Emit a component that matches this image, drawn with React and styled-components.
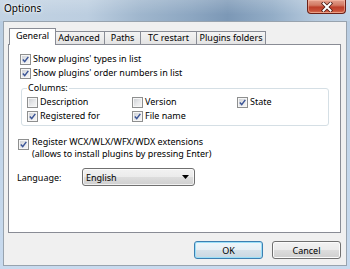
import React from 'react';
import styled, { createGlobalStyle, css } from 'styled-components';

const GlobalStyle = createGlobalStyle`
  html, body { margin: 0; padding: 0; }
  body {
    font-family: "Noto Sans", "Open Sans", sans-serif;
    font-size: 9px;
    color: #000;
  }
  * { box-sizing: border-box; }
`;

const Window = styled.div`
  width: 350px;
  height: 269px;
  display: flex;
  flex-direction: column;
  overflow: hidden;
  background: linear-gradient(180deg, #b7cbe0 0%, #c2d5e9 50%, #c8daee 100%);
`;

const TitleBar = styled.div`
  height: 21px;
  flex: none;
  display: flex;
  align-items: flex-start;
  justify-content: space-between;
  padding-left: 4px;
  background:
    linear-gradient(180deg, rgba(255,255,255,0.18), rgba(255,255,255,0) 70%),
    linear-gradient(90deg, #c3d3e3 0%, #bccee0 25%, #9fb6cd 40%, #8ca6c1 55%, #7c98b6 65%, #93adc7 78%, #b5c9dd 90%, #c2d4e6 100%);
`;

const Title = styled.span`
  font-size: 10px;
  line-height: 16px;
  color: #000;
  text-shadow: 0 0 4px rgba(255,255,255,0.9), 0 0 2px rgba(255,255,255,0.9);
`;

const CloseButton = styled.div`
  width: 39px;
  height: 14px;
  margin-right: 4px;
  border: 1px solid #6b2118;
  border-top: none;
  border-radius: 0 0 4px 4px;
  background: linear-gradient(180deg, #e3a08e 0%, #d27a64 40%, #bd3f2a 55%, #c9523a 85%, #dc8463 100%);
  box-shadow: inset 0 0 0 1px rgba(255,200,180,0.5);
  display: flex;
  align-items: center;
  justify-content: center;
`;

const Client = styled.div`
  flex: 1;
  margin: 0 3px 3px;
  border: 1px solid #98a3ae;
  background: #f0f0f0;
  display: flex;
  flex-direction: column;
  padding: 6px 5px 6px 4px;
`;

const TabStrip = styled.div`
  height: 17px;
  margin-bottom: -1px;
  display: flex;
  align-items: flex-start;
  padding-left: 3px;
  position: relative;
  z-index: 1;
`;

const Tab = styled.div`
  width: ${(p) => p.$w}px;
  height: 13px;
  margin-top: 3px;
  margin-left: -1px;
  line-height: 12px;
  text-align: center;
  white-space: nowrap;
  border: 1px solid #898c95;
  border-bottom: none;
  background: linear-gradient(180deg, #f4f4f4 0%, #ececec 50%, #e3e3e3 100%);
  ${(p) => p.$first && css`margin-left: 0;`}
  ${(p) =>
    p.$active &&
    css`
      width: ${p.$w + 4}px;
      height: 17px;
      margin: 0 -2px 0 -2px;
      padding-top: 1px;
      background: #fff;
      position: relative;
      z-index: 2;
    `}
`;

const Panel = styled.div`
  height: 189px;
  background: #fff;
  border: 1px solid #898c95;
  display: flex;
  flex-direction: column;
`;

const CheckRow = styled.label`
  display: flex;
  align-items: center;
  gap: 2px;
  height: 14px;
  line-height: 14px;
  white-space: nowrap;
  padding-left: ${(p) => p.$indent ?? 0}px;
  margin-top: ${(p) => p.$top ?? 0}px;
`;

const Box = styled.span`
  width: 11px;
  height: 11px;
  flex: none;
  border: 1px solid #8e8f8f;
  background: linear-gradient(135deg, #c9ccd1 0%, #e8e9eb 55%, #f7f7f7 100%);
  box-shadow: inset 0 0 0 1px #f6f6f6;
  display: flex;
  align-items: center;
  justify-content: center;
  margin-top: ${(p) => p.$top ?? 0}px;
`;

const Check = ({ checked, top }) => (
  <Box $top={top}>
    {checked && (
      <svg width="7" height="7" viewBox="0 0 7 7">
        <path d="M0.8 3.6 L2.7 5.6 L6.3 0.9" fill="none" stroke="#3b5597" strokeWidth="1.5" />
      </svg>
    )}
  </Box>
);

const GroupBox = styled.fieldset`
  margin: 2px 11px 0 12px;
  padding: 1px 4px 2px 5px;
  border: 1px solid #d5dfe5;
  border-radius: 3px;
  display: grid;
  grid-template-columns: 105px 105px 1fr;
`;

const Legend = styled.legend`
  padding: 0 1px;
  line-height: 12px;
`;

const MultiRow = styled.label`
  display: flex;
  align-items: flex-start;
  gap: 3px;
  margin-top: 10px;
  padding-left: 9px;
  line-height: 12px;
`;

const Lines = styled.span`
  display: flex;
  flex-direction: column;
`;

const LangRow = styled.div`
  display: flex;
  align-items: center;
  margin-top: 8px;
  padding-left: 8px;
  height: 18px;
`;

const LangLabel = styled.span`
  width: 65px;
`;

const Combo = styled.div`
  width: 113px;
  height: 18px;
  border: 1px solid #707070;
  border-radius: 3px;
  background: linear-gradient(180deg, #f2f2f2 0%, #ebebeb 50%, #dddddd 50%, #cfcfcf 100%);
  box-shadow: inset 0 0 0 1px rgba(255,255,255,0.7);
  display: flex;
  align-items: center;
  justify-content: space-between;
  padding: 0 5px 0 3px;
`;

const ButtonRow = styled.div`
  display: flex;
  justify-content: flex-end;
  gap: 9px;
  margin-top: 8px;
`;

const Button = styled.div`
  width: 69px;
  height: 18px;
  border: 1px solid #707070;
  border-radius: 3px;
  background: linear-gradient(180deg, #f2f2f2 0%, #ebebeb 50%, #dddddd 50%, #cfcfcf 100%);
  box-shadow: inset 0 0 0 1px #fbfbfb;
  display: flex;
  align-items: center;
  justify-content: center;
  ${(p) =>
    p.$default &&
    css`
      border-color: #3c7fb1;
      box-shadow: inset 0 0 0 1px #9bdff8;
      background: linear-gradient(180deg, #eef6fb 0%, #e6eff5 50%, #d6e2ea 50%, #c9d7e1 100%);
    `}
`;

const tabs = [
  { label: 'General', w: 43 },
  { label: 'Advanced', w: 52 },
  { label: 'Paths', w: 37 },
  { label: 'TC restart', w: 57 },
  { label: 'Plugins folders', w: 70 },
];

export default function App() {
  return (
    <>
      <GlobalStyle />
      <Window>
        <TitleBar>
          <Title>Options</Title>
          <CloseButton>
            <svg width="12" height="10" viewBox="0 0 12 10">
              <path d="M2.5 1.5 L9.5 8.5 M9.5 1.5 L2.5 8.5" stroke="#4a1a14" strokeWidth="3.6" strokeLinecap="square" />
              <path d="M2.5 1.5 L9.5 8.5 M9.5 1.5 L2.5 8.5" stroke="#fff" strokeWidth="2" strokeLinecap="square" />
            </svg>
          </CloseButton>
        </TitleBar>
        <Client>
          <TabStrip>
            {tabs.map((t, i) => (
              <Tab key={t.label} $w={t.w} $first={i === 0} $active={i === 0}>
                {t.label}
              </Tab>
            ))}
          </TabStrip>
          <Panel>
            <CheckRow $indent={11} $top={7}>
              <Check checked />
              Show plugins' types in list
            </CheckRow>
            <CheckRow $indent={11}>
              <Check checked />
              Show plugins' order numbers in list
            </CheckRow>
            <GroupBox>
              <Legend>Columns:</Legend>
              <CheckRow><Check />Description</CheckRow>
              <CheckRow><Check />Version</CheckRow>
              <CheckRow><Check checked />State</CheckRow>
              <CheckRow><Check checked />Registered for</CheckRow>
              <CheckRow><Check checked />File name</CheckRow>
            </GroupBox>
            <MultiRow>
              <Check checked top={3} />
              <Lines>
                <span>Register WCX/WLX/WFX/WDX extensions</span>
                <span>(allows to install plugins by pressing Enter)</span>
              </Lines>
            </MultiRow>
            <LangRow>
              <LangLabel>Language:</LangLabel>
              <Combo>
                <span>English</span>
                <svg width="7" height="4" viewBox="0 0 7 4">
                  <path d="M0 0 H7 L3.5 4 Z" fill="#000" />
                </svg>
              </Combo>
            </LangRow>
          </Panel>
          <ButtonRow>
            <Button $default>OK</Button>
            <Button>Cancel</Button>
          </ButtonRow>
        </Client>
      </Window>
    </>
  );
}
